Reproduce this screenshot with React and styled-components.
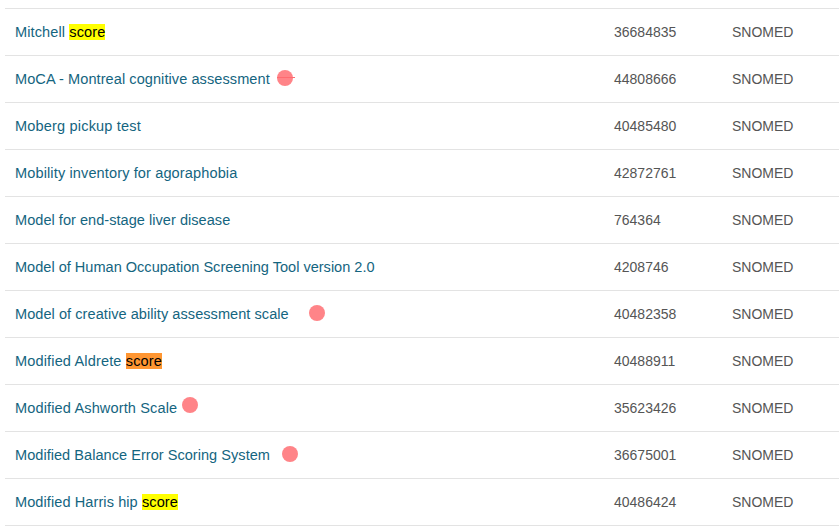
import styled, { createGlobalStyle } from "styled-components";

const GlobalStyle = createGlobalStyle`
    html, body {
        margin: 0;
        padding: 0;
        background: #fff;
        overflow: hidden;
    }
`

const rows = [
    { name: "Mitchell ", mark: "yellow", id: "36684835", track: 0.1 },
    { name: "MoCA - Montreal cognitive assessment", id: "44808666", track: 0.07, dot: { left: 272, top: 14 }, struck: true },
    { name: "Moberg pickup test", id: "40485480", track: 0.17 },
    { name: "Mobility inventory for agoraphobia", id: "42872761", track: 0.12 },
    { name: "Model for end-stage liver disease", id: "764364", track: 0.03 },
    { name: "Model of Human Occupation Screening Tool version 2.0", id: "4208746", track: 0 },
    { name: "Model of creative ability assessment scale", id: "40482358", track: 0.05, dot: { left: 304, top: 14 } },
    { name: "Modified Aldrete ", mark: "orange", id: "40488911", track: 0.14 },
    { name: "Modified Ashworth Scale", id: "35623426", track: 0.13, dot: { left: 177, top: 12 } },
    { name: "Modified Balance Error Scoring System", id: "36675001", track: 0.03, dot: { left: 277, top: 14 } },
    { name: "Modified Harris hip ", mark: "yellow", id: "40486424", track: 0.08 },
]

export default function App() {
    return (
        <Page>
            <GlobalStyle />
            {rows.map(row => (
                <Row key={row.id}>
                    <Name $track={row.track}>
                        {row.name}
                        {row.mark && <Mark $color={row.mark}>score</Mark>}
                    </Name>
                    <Cell>{row.id}</Cell>
                    <Cell>SNOMED</Cell>
                    {row.dot && (
                        <Dot style={{ left: row.dot.left, top: row.dot.top }}>
                            {row.struck && <Strike />}
                        </Dot>
                    )}
                </Row>
            ))}
        </Page>
    )
}

const Page = styled.div`
    box-sizing: border-box;
    width: 839px;
    height: 528px;
    padding: 8px 0 0 5px;
    overflow: hidden;
    font-family: "Liberation Sans", Arial, sans-serif;
    font-size: 14px;
`

const Row = styled.div`
    position: relative;
    box-sizing: border-box;
    display: grid;
    grid-template-columns: 599px 118px 1fr;
    align-items: center;
    width: 845px;
    height: 47px;
    padding-left: 10px;
    border-top: 1px solid #e3e3e3;
    &:last-child {
        height: 48px;
        border-bottom: 1px solid #e3e3e3;
    }
`

const Name = styled.div`
    color: #14657f;
    font-size: 14.56px;
    letter-spacing: ${props => props.$track}px;
    white-space: pre;
`

const Mark = styled.mark`
    color: #000;
    background: ${props => (props.$color === "orange" ? "#ff9632" : "#ffff00")};
`

const Cell = styled.div`
    color: #555;
`

const Dot = styled.span`
    position: absolute;
    width: 16px;
    height: 16px;
    border-radius: 50%;
    background: #ff8488;
`

const Strike = styled.span`
    position: absolute;
    left: 0;
    top: 7px;
    width: 18px;
    height: 1px;
    background: #ff6b70;
`
